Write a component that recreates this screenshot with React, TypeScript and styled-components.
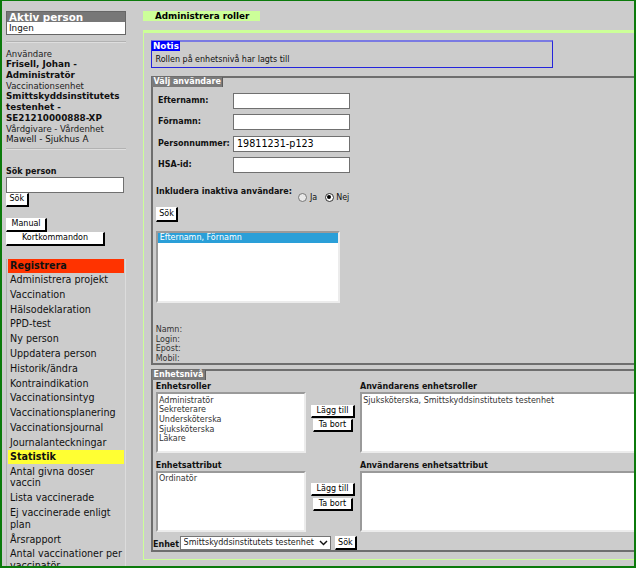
import React from "react";
import styled, { createGlobalStyle } from "styled-components";

const GlobalStyle = createGlobalStyle`
  html, body { margin: 0; padding: 0; background: #cccccc; }
  body { font-family: "DejaVu Sans", Verdana, sans-serif; color: #111; }
  *, *::before, *::after { box-sizing: border-box; }
`;

const Frame = styled.div`
  width: 636px;
  height: 568px;
  border: 2px solid #0b7a0b;
  border-top-width: 1px;
  background: #cccccc;
  overflow: hidden;
  display: flex;
  align-items: flex-start;
  padding-top: 10px;
`;

/* ---------- Sidebar ---------- */
const Sidebar = styled.aside`
  flex: 0 0 120px;
  margin: 0 17px 0 4px;
  display: flex;
  flex-direction: column;
  align-items: flex-start;
`;

const ActiveBox = styled.div`
  width: 120px;
  border: 1px solid #666;
`;

const ActiveHead = styled.div`
  height: 10px;
  line-height: 10px;
  background: #777;
  color: #fff;
  font-weight: bold;
  font-size: 10.4px;
  padding-left: 2px;
`;

const ActiveBody = styled.div`
  height: 12px;
  line-height: 12px;
  background: #fff;
  font-size: 8.8px;
  padding-left: 2px;
`;

const Rule = styled.div<{ $top: number; $bottom: number }>`
  width: 120px;
  height: 2px;
  border-top: 1px solid #b2b2b2;
  border-bottom: 1px solid #dedede;
  margin: ${(p) => p.$top}px 0 ${(p) => p.$bottom}px;
`;

const InfoLabel = styled.div`
  font-size: 8.5px;
  line-height: 10px;
  color: #222;
`;

const InfoValue = styled.div<{ $bold?: boolean }>`
  font-size: 8.8px;
  line-height: ${(p) => (p.$bold ? 11 : 10)}px;
  font-weight: ${(p) => (p.$bold ? "bold" : "normal")};
  color: #111;
`;

const SearchLabel = styled.div`
  margin-top: 16.5px;
  font-size: 8px;
  line-height: 10px;
  font-weight: bold;
`;

const SideInput = styled.input`
  width: 118px;
  height: 16px;
  border: 1px solid #707070;
  background: #fff;
  margin: 0;
  padding: 0 2px;
  font: 8.8px "DejaVu Sans", sans-serif;
`;

const Btn = styled.button<{ $w?: number; $h?: number }>`
  display: inline-block;
  ${(p) => (p.$w ? `width: ${p.$w}px;` : "")}
  height: ${(p) => p.$h ?? 14}px;
  margin: 0;
  padding: 0 4.5px;
  background: #fff;
  border-style: solid;
  border-width: 1px 2px 2px 1px;
  border-color: #fff #000 #000 #fff;
  font: 8px "DejaVu Sans", sans-serif;
  line-height: 10px;
  color: #000;
  text-align: center;
  white-space: nowrap;
  cursor: pointer;
`;

const SmallBtn = styled(Btn)`
  padding: 0 2.5px;
`;

const SideButtons = styled.div<{ $top: number }>`
  display: flex;
  flex-direction: column;
  align-items: flex-start;
  margin-top: ${(p) => p.$top}px;
`;

const Menu = styled.nav`
  margin-top: 13px;
  width: 120px;
  border-left: 1px solid #b0b0b0;
  border-right: 1px solid #dcdcdc;
  padding: 0 1px;
  display: flex;
  flex-direction: column;
`;

const MenuItem = styled.a<{ $tone?: "red" | "yellow" }>`
  display: block;
  font-size: 9.6px;
  color: #111;
  text-decoration: none;
  padding: ${(p) => (p.$tone ? "1px 0 1px 2px" : "1.5px 0 1.5px 2px")};
  line-height: ${(p) => (p.$tone ? 12 : 11.8)}px;
  font-weight: ${(p) => (p.$tone ? "bold" : "normal")};
  background: ${(p) =>
    p.$tone === "red" ? "#ff3300" : p.$tone === "yellow" ? "#ffff33" : "transparent"};
`;

/* ---------- Main ---------- */
const Main = styled.main`
  flex: 0 0 560px;
  min-width: 560px;
  display: flex;
  flex-direction: column;
  align-items: flex-start;
`;

const PageTitle = styled.h1`
  margin: 0;
  width: 117px;
  height: 10px;
  line-height: 10px;
  padding-left: 12px;
  background: #ccff99;
  font-size: 8.8px;
  font-weight: bold;
  color: #000;
  white-space: nowrap;
`;

const Panel = styled.section`
  align-self: stretch;
  margin-top: 9px;
  border-top: 3px solid #ccff99;
  border-left: 1px solid #ccff99;
  border-bottom: 1px solid #ccff99;
  padding: 7px 0 7px 7px;
  display: flex;
  flex-direction: column;
  align-items: flex-start;
`;

const Notice = styled.div`
  width: 402px;
  height: 28px;
  border: 1px solid #2424dc;
  border-top: 2px solid #7a7ae2;
  display: flex;
  flex-direction: column;
  align-items: flex-start;
`;

const NoticeLegend = styled.div`
  margin-top: -1px;
  background: #0000ff;
  color: #fff;
  font-weight: bold;
  font-size: 8.8px;
  line-height: 10px;
  padding: 0 1px;
`;

const NoticeText = styled.div`
  font-size: 8px;
  line-height: 10px;
  padding: 4px 0 0 3.5px;
  color: #111;
`;

const Fieldset = styled.div<{ $top: number }>`
  width: 500px;
  margin-top: ${(p) => p.$top}px;
  border: 2px solid #6e6e6e;
  border-right: none;
  display: flex;
  flex-direction: column;
  align-items: flex-start;
`;

const Legend = styled.div`
  margin: -1px 0 0 -1px;
  background: #7b7b7b;
  color: #fff;
  font-size: 8px;
  font-weight: bold;
  line-height: 10px;
  padding: 0 1.5px;
  border-right: 1px solid #5c5c5c;
`;

const FormGrid = styled.div`
  display: grid;
  grid-template-columns: 75px 117px;
  grid-auto-rows: 16px;
  row-gap: 5.33px;
  align-items: center;
  margin: 6px 0 0 5px;
`;

const FieldLabel = styled.label`
  font-size: 8px;
  line-height: 10px;
  font-weight: bold;
  color: #111;
`;

const TextInput = styled.input`
  width: 117px;
  height: 16px;
  margin: 0;
  border: 1px solid #707070;
  background: #fff;
  padding: 0 3px;
  font: 9.6px "DejaVu Sans", sans-serif;
  color: #000;
`;

const RadioRow = styled.div`
  display: flex;
  align-items: flex-start;
  margin: 14.5px 0 0 3px;
`;

const RadioGroup = styled.div`
  display: flex;
  align-items: center;
  height: 9px;
  margin: 5.5px 0 0 6.5px;
  font-size: 8px;
`;

const Radio = styled.span<{ $checked?: boolean }>`
  display: inline-flex;
  align-items: center;
  justify-content: center;
  width: 9px;
  height: 9px;
  border-radius: 50%;
  border: 1px solid ${(p) => (p.$checked ? "#333" : "#777")};
  background: ${(p) => (p.$checked ? "#fff" : "#e8e8e8")};
  &::after {
    content: "";
    display: ${(p) => (p.$checked ? "block" : "none")};
    width: 4px;
    height: 4px;
    border-radius: 50%;
    background: #000;
  }
`;

const RadioText = styled.span<{ $gap: number }>`
  margin: 0 ${(p) => p.$gap}px 0 2.5px;
  line-height: 9px;
  color: #111;
`;

const Block = styled.div<{ $top: number; $left?: number }>`
  display: flex;
  align-items: flex-start;
  margin: ${(p) => p.$top}px 0 0 ${(p) => p.$left ?? 2.7}px;
`;

const ListBox = styled.div<{ $w?: number; $h: number }>`
  ${(p) => (p.$w ? `width: ${p.$w}px;` : "")}
  height: ${(p) => p.$h}px;
  background: #fff;
  border-style: solid;
  border-width: 2px;
  border-color: #9a9a9a #ececec #ececec #9a9a9a;
  overflow: hidden;
`;

const ListOption = styled.div<{ $selected?: boolean }>`
  font-size: 8px;
  line-height: 9.6px;
  padding-left: ${(p) => (p.$selected ? 2 : 1.3)}px;
  white-space: nowrap;
  color: ${(p) => (p.$selected ? "#fff" : "#333")};
  background: ${(p) => (p.$selected ? "#2a9fd8" : "transparent")};
`;

const OptionList = styled.div`
  padding-top: 1.5px;
`;

const Details = styled.div`
  margin: 22px 0 0 2.7px;
  font-size: 8px;
  line-height: 9.5px;
  color: #333;
`;

const UnitGrid = styled.div`
  align-self: stretch;
  display: grid;
  grid-template-columns: 150.3px 54px 1fr;
  margin: 2.5px 0 0 2.7px;
`;

const ColLabel = styled.div<{ $top?: number }>`
  font-size: 8px;
  line-height: 10px;
  font-weight: bold;
  color: #111;
  white-space: nowrap;
  margin-top: ${(p) => p.$top ?? 0}px;
`;

const MoveButtons = styled.div`
  display: flex;
  flex-direction: column;
  align-items: center;
  gap: 1.5px;
  padding-top: 12.5px;
`;

const UnitRow = styled.div`
  display: flex;
  align-items: flex-end;
  margin-top: 4px;
`;

const UnitLabel = styled.span`
  font-size: 8px;
  line-height: 10px;
  font-weight: bold;
  color: #111;
`;

const SelectWrap = styled.div`
  position: relative;
  width: 151px;
  height: 14px;
  margin-left: 0.5px;
`;

const Select = styled.select`
  appearance: none;
  -webkit-appearance: none;
  display: block;
  width: 100%;
  height: 100%;
  margin: 0;
  border: 1px solid #767676;
  border-radius: 0;
  background: #fff;
  padding: 0 0 0 3px;
  font: 8px "DejaVu Sans", sans-serif;
  color: #222;
`;

const Chevron = styled.svg`
  position: absolute;
  right: 2.6px;
  top: 4px;
  pointer-events: none;
`;

const UnitSearch = styled(SmallBtn)`
  margin-left: 4px;
  height: 13.5px;
`;

const menuItems: { label: string; tone?: "red" | "yellow" }[] = [
  { label: "Registrera", tone: "red" },
  { label: "Administrera projekt" },
  { label: "Vaccination" },
  { label: "Hälsodeklaration" },
  { label: "PPD-test" },
  { label: "Ny person" },
  { label: "Uppdatera person" },
  { label: "Historik/ändra" },
  { label: "Kontraindikation" },
  { label: "Vaccinationsintyg" },
  { label: "Vaccinationsplanering" },
  { label: "Vaccinationsjournal" },
  { label: "Journalanteckningar" },
  { label: "Statistik", tone: "yellow" },
  { label: "Antal givna doser vaccin" },
  { label: "Lista vaccinerade" },
  { label: "Ej vaccinerade enligt plan" },
  { label: "Årsrapport" },
  { label: "Antal vaccinationer per vaccinatör" },
];

const roles = ["Administratör", "Sekreterare", "Undersköterska", "Sjuksköterska", "Läkare"];

export default function App() {
  return (
    <>
      <GlobalStyle />
      <Frame>
        <Sidebar>
          <ActiveBox>
            <ActiveHead>Aktiv person</ActiveHead>
            <ActiveBody>Ingen</ActiveBody>
          </ActiveBox>
          <Rule $top={6} $bottom={5.5} />
          <InfoLabel>Användare</InfoLabel>
          <InfoValue $bold>Frisell, Johan - Administratör</InfoValue>
          <InfoLabel>Vaccinationsenhet</InfoLabel>
          <InfoValue $bold>Smittskyddsinstitutets testenhet - SE21210000888-XP</InfoValue>
          <InfoLabel>Vårdgivare - Vårdenhet</InfoLabel>
          <InfoValue>Mawell - Sjukhus A</InfoValue>
          <Rule $top={4.5} $bottom={0} />
          <SearchLabel>Sök person</SearchLabel>
          <SideInput type="text" />
          <SmallBtn>Sök</SmallBtn>
          <SideButtons $top={11}>
            <Btn>Manual</Btn>
            <Btn $w={99}>Kortkommandon</Btn>
          </SideButtons>
          <Menu>
            {menuItems.map((m) => (
              <MenuItem key={m.label} $tone={m.tone} href="#">
                {m.label}
              </MenuItem>
            ))}
          </Menu>
        </Sidebar>

        <Main>
          <PageTitle>Administrera roller</PageTitle>
          <Panel>
            <Notice>
              <NoticeLegend>Notis</NoticeLegend>
              <NoticeText>Rollen på enhetsnivå har lagts till</NoticeText>
            </Notice>

            <Fieldset $top={8}>
              <Legend>Välj användare</Legend>
              <FormGrid>
                <FieldLabel>Efternamn:</FieldLabel>
                <TextInput type="text" />
                <FieldLabel>Förnamn:</FieldLabel>
                <TextInput type="text" />
                <FieldLabel>Personnummer:</FieldLabel>
                <TextInput type="text" defaultValue="19811231-p123" />
                <FieldLabel>HSA-id:</FieldLabel>
                <TextInput type="text" />
              </FormGrid>
              <RadioRow>
                <FieldLabel>Inkludera inaktiva användare:</FieldLabel>
                <RadioGroup>
                  <Radio />
                  <RadioText $gap={7.5}>Ja</RadioText>
                  <Radio $checked />
                  <RadioText $gap={0}>Nej</RadioText>
                </RadioGroup>
              </RadioRow>
              <Block $top={5}>
                <SmallBtn $h={15}>Sök</SmallBtn>
              </Block>
              <Block $top={9.3}>
                <ListBox $w={184} $h={72}>
                  <ListOption $selected>Efternamn, Förnamn</ListOption>
                </ListBox>
              </Block>
              <Details>
                <div>Namn:</div>
                <div>Login:</div>
                <div>Epost:</div>
                <div>Mobil:</div>
              </Details>
            </Fieldset>

            <Fieldset $top={3.5}>
              <Legend>Enhetsnivå</Legend>
              <UnitGrid>
                <ColLabel>Enhetsroller</ColLabel>
                <div />
                <ColLabel>Användarens enhetsroller</ColLabel>
                <ListBox $h={61}>
                  <OptionList>
                    {roles.map((r) => (
                      <ListOption key={r}>{r}</ListOption>
                    ))}
                  </OptionList>
                </ListBox>
                <MoveButtons>
                  <Btn $h={13}>Lägg till</Btn>
                  <Btn $h={13}>Ta bort</Btn>
                </MoveButtons>
                <ListBox $h={61}>
                  <OptionList>
                    <ListOption>Sjuksköterska, Smittskyddsinstitutets testenhet</ListOption>
                  </OptionList>
                </ListBox>
                <ColLabel $top={7.5}>Enhetsattribut</ColLabel>
                <div />
                <ColLabel $top={7.5}>Användarens enhetsattribut</ColLabel>
                <ListBox $h={61}>
                  <OptionList>
                    <ListOption>Ordinatör</ListOption>
                  </OptionList>
                </ListBox>
                <MoveButtons>
                  <Btn $h={13}>Lägg till</Btn>
                  <Btn $h={13}>Ta bort</Btn>
                </MoveButtons>
                <ListBox $h={61} />
              </UnitGrid>
              <UnitRow>
                <UnitLabel>Enhet</UnitLabel>
                <SelectWrap>
                  <Select defaultValue="smi">
                    <option value="smi">Smittskyddsinstitutets testenhet</option>
                  </Select>
                  <Chevron width="9" height="6" viewBox="0 0 9 6">
                    <path d="M1 1 L4.5 4.6 L8 1" fill="none" stroke="#111" strokeWidth="1.4" />
                  </Chevron>
                </SelectWrap>
                <UnitSearch>Sök</UnitSearch>
              </UnitRow>
            </Fieldset>
          </Panel>
        </Main>
      </Frame>
    </>
  );
}
